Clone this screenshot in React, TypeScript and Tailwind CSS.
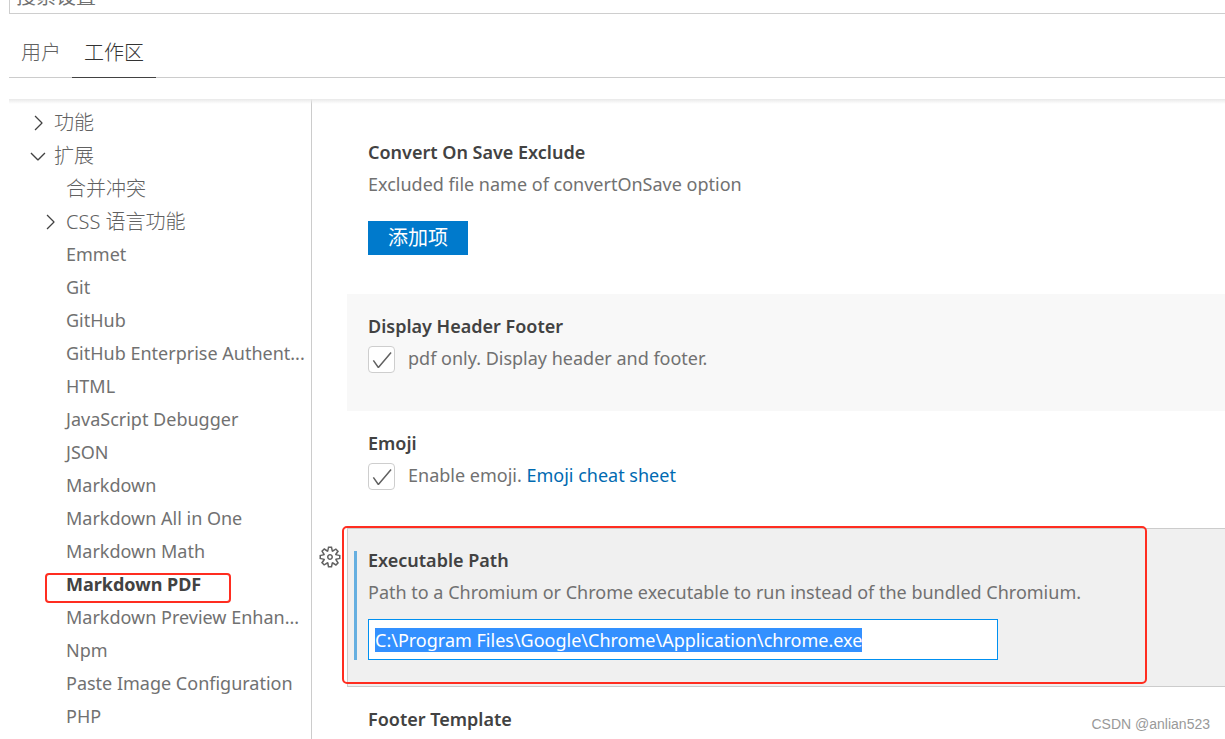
import { useEffect, useRef } from "react";
import { VscCheck, VscChevronDown, VscChevronRight, VscGear } from "react-icons/vsc";

type TocItem = {
  label: string;
  level: 0 | 1;
  state?: "open" | "closed";
  active?: boolean;
  cjk?: boolean;
};

const toc: TocItem[] = [
  { label: "功能", level: 0, state: "closed", cjk: true },
  { label: "扩展", level: 0, state: "open", cjk: true },
  { label: "合并冲突", level: 1, cjk: true },
  { label: "CSS 语言功能", level: 1, state: "closed", cjk: true },
  { label: "Emmet", level: 1 },
  { label: "Git", level: 1 },
  { label: "GitHub", level: 1 },
  { label: "GitHub Enterprise Authent...", level: 1 },
  { label: "HTML", level: 1 },
  { label: "JavaScript Debugger", level: 1 },
  { label: "JSON", level: 1 },
  { label: "Markdown", level: 1 },
  { label: "Markdown All in One", level: 1 },
  { label: "Markdown Math", level: 1 },
  { label: "Markdown PDF", level: 1, active: true },
  { label: "Markdown Preview Enhan...", level: 1 },
  { label: "Npm", level: 1 },
  { label: "Paste Image Configuration", level: 1 },
  { label: "PHP", level: 1 },
];

function TocRow({ item }: { item: TocItem }) {
  const Chevron = item.state === "open" ? VscChevronDown : VscChevronRight;
  return (
    <li className={item.level === 0 ? "relative pl-4" : "relative pl-7"}>
      <a
        href="#"
        className={
          item.active
            ? "flex h-[33px] items-center whitespace-nowrap font-bold text-[#424242]"
            : "flex h-[33px] items-center whitespace-nowrap text-[#717171]"
        }
      >
        <span className="flex w-[29px] shrink-0 justify-center pr-1">
          {item.state && <Chevron className="size-6 shrink-0 text-[#424242]" />}
        </span>
        <span className={item.cjk ? "text-[20px] font-light text-[#616161]" : ""}>{item.label}</span>
      </a>
      {item.active && (
        <div className="pointer-events-none absolute left-9 top-[5px] h-[30px] w-[186px] rounded-[4px] border-2 border-[#ff2d20]" />
      )}
    </li>
  );
}

function Setting({
  title,
  children,
  className = "border-transparent pb-[37px]",
}: {
  title: string;
  children?: React.ReactNode;
  className?: string;
}) {
  return (
    <section className={`relative border-y border-l pl-5 pt-[19px] ${className}`}>
      <h2 className="font-semibold leading-6 text-[#424242]">{title}</h2>
      {children}
    </section>
  );
}

function CheckSetting({ id, children }: { id: string; children: React.ReactNode }) {
  return (
    <div className="mt-2 flex gap-[13px]">
      <span className="relative size-[27px] shrink-0">
        <input
          id={id}
          type="checkbox"
          defaultChecked
          className="peer block size-[27px] appearance-none rounded-[4px] border border-[#cecece] bg-white"
        />
        <VscCheck className="pointer-events-none absolute inset-0 m-auto hidden size-6 text-[#616161] peer-checked:block" />
      </span>
      <label htmlFor={id} className="leading-6">
        {children}
      </label>
    </div>
  );
}

export default function App() {
  const pathRef = useRef<HTMLInputElement>(null);

  useEffect(() => {
    pathRef.current?.focus();
    pathRef.current?.select();
  }, []);

  return (
    <div className="relative flex h-screen flex-col overflow-hidden bg-white pl-[9px] font-['Noto_Sans','Noto_Sans_CJK_SC',sans-serif] text-[18px] text-[#717171]">
      {/* Search, scrolled half out of view */}
      <div className="flex h-[14px] shrink-0 items-end overflow-hidden">
        <input
          aria-label="搜索设置"
          placeholder="搜索设置"
          className="h-9 w-full shrink-0 border border-r-0 border-[#cecece] px-[6px] text-[20px] outline-none placeholder:text-[#717171]"
        />
      </div>

      {/* Scope tabs */}
      <div className="flex h-16 shrink-0 items-end border-b border-[#cccccc] text-[20px] font-light">
        <button className="h-12 pl-3 pr-[11px] text-[#616161]">用户</button>
        <button className="-mb-px h-[49px] border-b border-[#424242] px-3 text-[#333333]">工作区</button>
      </div>

      <div className="relative mt-[21px] flex min-h-0 flex-1">
        <div className="pointer-events-none absolute inset-x-0 top-0 z-10 h-[5px] bg-gradient-to-b from-[#e9e9e9] to-transparent" />

        <nav className="w-[303px] shrink-0 overflow-hidden border-r border-[#cccccc] pt-[7px]">
          <ul>
            {toc.map((item) => (
              <TocRow key={item.label} item={item} />
            ))}
          </ul>
        </nav>

        <main className="min-w-0 flex-1 overflow-hidden pl-[35px] pt-[21px]">
          <Setting title="Convert On Save Exclude" className="border-transparent pb-[38px]">
            <p className="mt-2 leading-6">Excluded file name of convertOnSave option</p>
            <button className="mt-[25px] block h-[34px] bg-[#007acc] px-5 text-[20px] text-white">添加项</button>
          </Setting>

          <Setting title="Display Header Footer" className="border-transparent bg-[#f8f8f8] pb-[37px]">
            <CheckSetting id="header-footer">pdf only. Display header and footer.</CheckSetting>
          </Setting>

          <Setting title="Emoji">
            <CheckSetting id="emoji">
              Enable emoji.{" "}
              <a href="#" className="text-[#006ab1]">
                Emoji cheat sheet
              </a>
            </CheckSetting>
          </Setting>

          <Setting title="Executable Path" className="border-[#cccccc] bg-[#f0f0f0] pb-[26px]">
            <button aria-label="More actions" className="absolute -left-[30px] top-4 text-[#616161]">
              <VscGear className="size-6" />
            </button>
            {/* modified marker */}
            <div className="absolute bottom-[26px] left-[6px] top-[22px] w-[3px] bg-[#66afe0]" />
            <label htmlFor="exec-path" className="mt-2 block leading-6">
              Path to a Chromium or Chrome executable to run instead of the bundled Chromium.
            </label>
            <input
              id="exec-path"
              ref={pathRef}
              defaultValue="C:\Program Files\Google\Chrome\Application\chrome.exe"
              className="mt-[15px] block h-[41px] w-full max-w-[630px] border border-[#0090f1] bg-white px-[6px] text-[#616161] outline-none selection:bg-[#3390ff] selection:text-white"
            />
            <div className="pointer-events-none absolute -left-[6px] -top-[3px] h-[158px] w-[805px] rounded-[5px] border-2 border-[#ff2d20]" />
          </Setting>

          <Setting title="Footer Template" />
        </main>
      </div>

      <div className="absolute bottom-[5px] right-[15px] font-['Liberation_Sans',sans-serif] text-[14px] leading-5 text-[#999999]">
        CSDN @anlian523
      </div>
    </div>
  );
}
